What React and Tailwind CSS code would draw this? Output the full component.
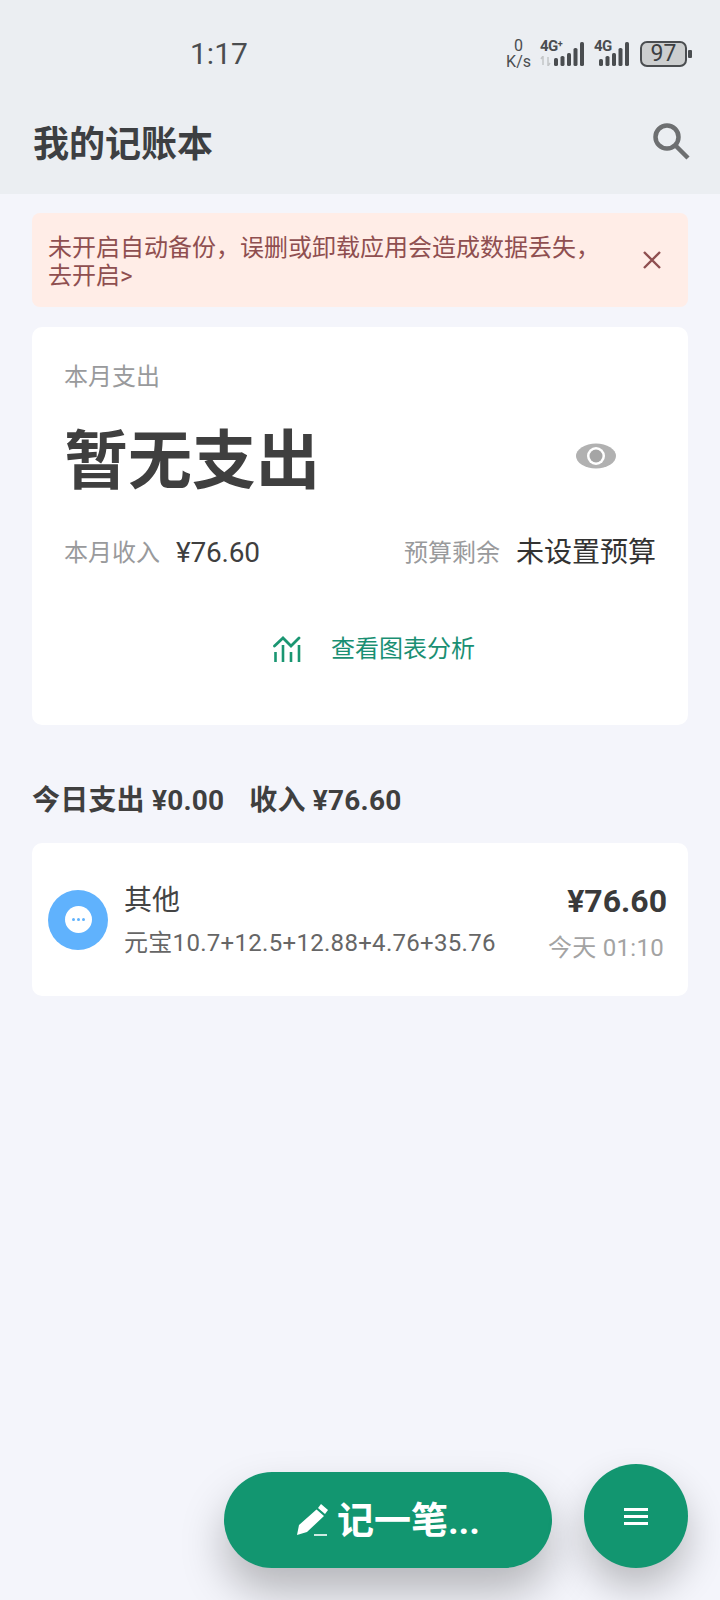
const font = { fontFamily: '"Roboto", "Noto Sans CJK SC", sans-serif' };

function Signal({ bars }) {
  return (
    <svg width="30" height="24" viewBox="0 0 30 24" className="block">
      {bars.map((h, i) => (
        <rect key={i} x={i * 6.5} y={24 - h} width="4" height={h} rx="1.6" fill="#4a4d50" />
      ))}
    </svg>
  );
}

function StatusBar() {
  return (
    <div className="flex h-[106px] items-center pt-[1px] pr-[28px] pl-[190px]">
      <div className="text-[30px] leading-none text-[#4a4d50]">1:17</div>
      <div className="ml-auto flex items-center">
        <div className="mr-[9px] flex flex-col items-center text-[16px] leading-[16px] text-[#4a4d50]">
          <span>0</span>
          <span>K/s</span>
        </div>
        <div className="relative mr-[10px] h-[25px] w-[44px]">
          <span className="absolute top-[-2px] left-0 text-[15px] leading-[14px] font-bold tracking-[-0.5px] text-[#4a4d50]">
            4G<span className="relative top-[-4px] text-[9px]">+</span>
          </span>
          <div className="absolute top-[1px] right-0 w-[30px]">
            <Signal bars={[8, 10, 13, 18, 24]} />
          </div>
          <svg width="12" height="10" viewBox="0 0 12 10" className="absolute bottom-0 left-0">
            <path d="M3 0v9M1 3l2-3M8 10V1M8 10l2-3" stroke="#c4c6c8" strokeWidth="1.5" fill="none" />
          </svg>
        </div>
        <div className="relative mr-[11px] h-[25px] w-[35px]">
          <span className="absolute top-[-2px] left-0 z-10 text-[15px] leading-[14px] font-bold tracking-[-0.5px] text-[#4a4d50]">
            4G
          </span>
          <div className="absolute top-[1px] right-0 w-[30px]">
            <Signal bars={[7, 10, 13, 18, 24]} />
          </div>
        </div>
        <div className="flex h-[26px] w-[47px] items-center justify-center rounded-[7px] border-2 border-[#4a4d50] bg-[#cccecf] text-[23px] leading-none text-[#3d3f42]">
          97
        </div>
        <div className="ml-[1px] h-[8px] w-[4px] rounded-[1px] bg-[#4a4d50]" />
      </div>
    </div>
  );
}

function Banner() {
  return (
    <div className="mx-8 mt-[19px] flex h-[94px] items-center justify-between rounded-[8px] bg-[#ffede7] pr-[27px] pl-[16px]">
      <p className="w-[560px] pt-[4px] text-[24px] leading-[28px] text-[#8f4f50]">
        未开启自动备份，误删或卸载应用会造成数据丢失，
        <br />
        去开启&gt;
      </p>
      <svg width="20" height="20" viewBox="0 0 20 20" className="mr-[-1px]">
        <path d="M2 2l16 16M18 2L2 18" stroke="#8f4f50" strokeWidth="2.4" fill="none" />
      </svg>
    </div>
  );
}

function SummaryCard() {
  return (
    <div className="mx-8 mt-[20px] h-[398px] rounded-[10px] bg-white pt-[34px] pr-[32px] pl-[32px]">
      <div className="text-[24px] leading-[32px] text-[#999a9c]">本月支出</div>
      <div className="mt-[27px] flex h-[84px] items-center justify-between">
        <div className="text-[64px] leading-[84px] font-bold text-[#3f3f3f]">暂无支出</div>
        <svg width="40" height="26" viewBox="0 0 40 26" className="mr-[40px] mb-[12px]">
          <ellipse cx="20" cy="13" rx="20" ry="12.5" fill="#b1b1b1" />
          <circle cx="20" cy="13" r="9" fill="#fff" />
          <circle cx="20" cy="13" r="6.5" fill="#a5a5a5" />
        </svg>
      </div>
      <div className="mt-[31px] flex items-center justify-between">
        <div className="flex items-center">
          <span className="text-[24px] leading-[36px] text-[#999a9c]">本月收入</span>
          <span className="ml-[16px] text-[28px] leading-[36px] tracking-[-0.2px] text-[#3f3f3f]">¥76.60</span>
        </div>
        <div className="flex items-center">
          <span className="text-[24px] leading-[36px] text-[#999a9c]">预算剩余</span>
          <span className="ml-[16px] text-[28px] leading-[36px] text-[#333]">未设置预算</span>
        </div>
      </div>
      <div className="mt-[62px] ml-[28px] flex items-center justify-center">
        <svg width="28" height="26" viewBox="0 0 28 26" className="mr-[30px]">
          <path d="M1.5 10L10 2l8 8 8-8" stroke="#1a9672" strokeWidth="2.8" fill="none" strokeLinecap="round" />
          <path d="M2.5 16v10M10 9v17M18 16v10M26 9v17" stroke="#1a9672" strokeWidth="2.6" fill="none" />
        </svg>
        <span className="text-[24px] leading-[32px] text-[#1a8f73]">查看图表分析</span>
      </div>
    </div>
  );
}

function RecordRow() {
  return (
    <div className="mx-8 mt-[24px] flex h-[153px] items-center rounded-[10px] bg-white pr-[21px] pl-[16px]">
      <div className="flex h-[60px] w-[60px] items-center justify-center rounded-full bg-[#60b2fd]">
        <div className="flex h-[27px] w-[27px] items-center justify-center gap-[2px] rounded-full bg-white">
          <span className="h-[3px] w-[3px] rounded-full bg-[#60b2fd]" />
          <span className="h-[3px] w-[3px] rounded-full bg-[#60b2fd]" />
          <span className="h-[3px] w-[3px] rounded-full bg-[#60b2fd]" />
        </div>
      </div>
      <div className="ml-[16px] pt-[3px]">
        <div className="text-[28px] leading-[36px] text-[#444]">其他</div>
        <div className="mt-[8px] text-[24px] leading-[32px] tracking-[0.3px] text-[#666]">
          元宝10.7+12.5+12.88+4.76+35.76
        </div>
      </div>
      <div className="ml-auto flex flex-col items-end pt-[6px]">
        <div className="text-[32px] leading-[40px] font-bold text-[#3a3a3a]">¥76.60</div>
        <div className="mt-[11px] mr-[3px] text-[24px] leading-[32px] tracking-[0.3px] text-[#a3a3a3]">今天 01:10</div>
      </div>
    </div>
  );
}

export default function App() {
  return (
    <div className="relative min-h-[1600px] overflow-hidden bg-[#f4f5fb]" style={font}>
      <div className="h-[194px] bg-[#ebeef2]">
        <StatusBar />
        <div className="flex h-[70px] items-center justify-between pr-[30px] pl-[33px]">
          <div className="pt-[8px] text-[36px] leading-[44px] font-bold text-[#3d3f42]">我的记账本</div>
          <svg width="38" height="38" viewBox="0 0 38 38">
            <circle cx="15" cy="15" r="11.5" stroke="#6d6f71" strokeWidth="4.5" fill="none" />
            <path d="M23.5 23.5L36 36" stroke="#6d6f71" strokeWidth="4.5" fill="none" />
          </svg>
        </div>
      </div>
      <Banner />
      <SummaryCard />
      <div className="mx-8 mt-[58px] flex text-[28px] leading-[36px] font-bold tracking-[0.2px] text-[#3f3f3f]">
        <span>今日支出 ¥0.00</span>
        <span className="ml-[25px]">收入 ¥76.60</span>
      </div>
      <RecordRow />

      {/* bottom floating buttons */}
      <div className="absolute right-8 bottom-[32px] flex items-end gap-[32px]">
        <div className="flex h-[96px] w-[328px] items-center justify-center rounded-full bg-[#129670] text-white shadow-[0_24px_44px_rgba(0,0,0,0.26)]">
          <svg width="33" height="32" viewBox="0 0 33 32" className="mr-[8px]">
            <path d="M25 0l7 6-3 4-7-6zM20.5 5.5l7.5 6.5L11 28 1 31l2-10z" fill="#fff" />
            <path d="M18 31h13" stroke="#fff" strokeWidth="1.6" />
          </svg>
          <span className="pt-[4px] text-[37px] leading-[44px] font-bold">记一笔...</span>
        </div>
        <div className="flex h-[104px] w-[104px] items-center justify-center rounded-full bg-[#129670] shadow-[0_20px_38px_rgba(0,0,0,0.24)]">
          <div className="flex w-[24px] flex-col gap-[4px]">
            <span className="h-[3px] bg-white" />
            <span className="h-[3px] bg-white" />
            <span className="h-[3px] bg-white" />
          </div>
        </div>
      </div>
    </div>
  );
}
